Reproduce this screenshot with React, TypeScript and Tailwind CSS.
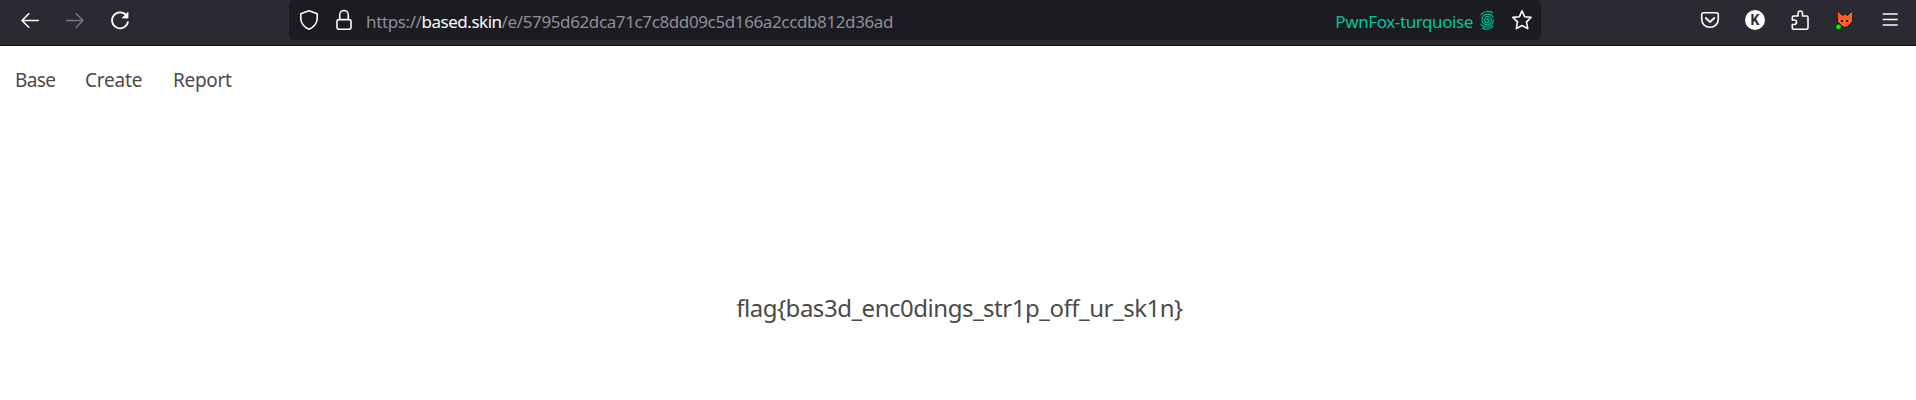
import React from "react";

const FOX = [
  "..k............k..",
  "..ok..........ko..",
  "..ook........koo..",
  "..oook......kooo..",
  "..ooookooookoooo..",
  "..oooooooooooooo..",
  "..oooooooooooooo..",
  "k.oooooooooooooo.k",
  ".kooooooooooooook.",
  "..oookkoookkoooo..",
  "..oookkoookkoooo..",
  ".k.oooooooooooo.k.",
  "....oooooooooo....",
  ".....oooooooo.....",
  "......oooooo......",
  ".......kook.......",
  "........kk........",
];

function Icon({ className, viewBox, children }: { className: string; viewBox: string; children: React.ReactNode }) {
  return (
    <svg className={`block shrink-0 ${className}`} viewBox={viewBox} fill="none" stroke="currentColor" strokeWidth="1.6" strokeLinecap="round" strokeLinejoin="round">
      {children}
    </svg>
  );
}

function Arrow({ className }: { className: string }) {
  return (
    <Icon className={`h-5 w-5 ${className}`} viewBox="0 0 20 20">
      <path d="M18.3 10.5H2M8.8 3.7 2 10.5l6.8 6.8" />
    </Icon>
  );
}

function AddressBar() {
  return (
    <div className="flex h-10 w-[1252px] shrink-0 items-start rounded-[5px] bg-[#1c1b22] text-[17px] leading-6 text-[#fbfbfe]">
      <Icon className="ml-[10px] mt-[9px] h-[22px] w-5" viewBox="0 0 20 22">
        <path d="M10 1.8 18.2 4.8V9.5C18.2 14.2 14.5 18.5 10 20.3 5.5 18.5 1.8 14.2 1.8 9.5V4.8Z" />
      </Icon>
      <Icon className="ml-[17px] mt-[9px] h-[22px] w-4" viewBox="0 0 16 22">
        <rect x="1" y="10.6" width="14" height="9.6" rx="2" />
        <path d="M3.7 10.5V5.8a4.3 4.3 0 0 1 8.6 0v4.7" />
      </Icon>
      <span className="ml-[14px] mt-[10px] w-[700px] whitespace-nowrap text-[#8f8f96] tracking-[-0.38px]">
        https://<span className="text-[#fbfbfe] tracking-[-0.48px]">based.skin</span>/e/5795d62dca71c7c8dd09c5d166a2ccdb812d36ad
      </span>
      <span className="ml-auto mt-[10px] whitespace-nowrap text-[#00c79a] tracking-[-0.4px]">PwnFox-turquoise</span>
      <Icon className="ml-[6px] mt-[10px] h-5 w-4 text-[#00b88f]" viewBox="0 0 16 20">
        <g strokeWidth="1.2">
          <path d="M8.300 10.300c-1-.3-.6-1.800.5-1.600 2.200.3 1.500 4-.9 3.900-3.600-.1-3.200-6.300 1-6.200 4.900.2 4.200 8.300-.9 8.400C1.400 14.900 1 4.400 8.700 4.100c2.600-.1 4.400 1.200 5.200 3" />
          <path d="M2 4.800C4.500.9 10.300.6 13.500 2.700M14.300 9.800c.1 4-2.700 7.200-6.500 7.200-2.400 0-4.400-.9-5.800-2.700M3.500 18.100c3.700 1.800 8 1.100 10.500-2" />
        </g>
      </Icon>
      <Icon className="ml-[16px] mr-[8px] mt-[9px] h-[22px] w-[22px]" viewBox="0 0 22 22">
        <path d="m11 1.9 2.6 5.8 6.5.7-4.6 4.4 1.2 6.8L11 16.5l-5.7 3.1 1.200-6.800L1.900 8.400l6.500-.7Z" />
      </Icon>
    </div>
  );
}

function Fox() {
  return (
    <svg className="block h-5 w-5 shrink-0" viewBox="0 0 20 20" shapeRendering="crispEdges">
      {FOX.flatMap((row, y) =>
        row.split("").map((c, x) =>
          c === "." ? null : <rect key={`${x}-${y}`} x={x + 1} y={y + 1} width="1" height="1" fill={c === "o" ? "#ff5c28" : "#17100f"} />,
        ),
      )}
      <circle cx="3.5" cy="16.8" r="2.900" fill="#00f500" stroke="#101010" strokeWidth=".8" shapeRendering="auto" />
    </svg>
  );
}

export default function App() {
  return (
    <div className="flex h-[400px] w-[1916px] flex-col overflow-hidden bg-white font-['Noto_Sans','Open_Sans',sans-serif]">
      <header className="flex h-[46px] shrink-0 items-start border-b border-[#0c0c0d] bg-[#2b2a33] text-[#fbfbfe]">
        <div className="flex w-[289px] shrink-0 gap-[25px] pl-5 pt-[10px]">
          <Arrow className="" />
          <Arrow className="-scale-x-100 text-[#77767d]" />
          <Icon className="-ml-px h-[22px] w-[22px]" viewBox="0 0 22 22">
            <path strokeWidth="1.8" strokeLinecap="butt" d="M17.300 5.300A8 8 0 1 0 19 11.300" />
            <path d="M19 2.500v5.500h-5.500Z" fill="currentColor" strokeWidth=".8" />
          </Icon>
        </div>
        <AddressBar />
        <div className="ml-auto flex items-start gap-[25px] pr-4 pt-[10px]">
          <Icon className="h-5 w-5" viewBox="0 0 20 20">
            <path d="M3.500 2.800h13a1.800 1.800 0 0 1 1.800 1.800V9c0 5.200-3.800 8.300-8.300 8.300S1.700 14.200 1.700 9V4.600A1.800 1.800 0 0 1 3.500 2.800Z" />
            <path strokeWidth="1.8" d="m5.700 8 4.300 4 4.300-4" />
          </Icon>
          <span className="flex h-5 w-5 items-center justify-center rounded-full bg-[#fbfbfe] font-['Roboto',sans-serif] text-[14px] font-bold leading-5 text-[#2b2a33]">K</span>
          <Icon className="-mt-px h-[22px] w-5" viewBox="0 0 20 22">
            <path d="M3.300 20.200h13.200a1.500 1.500 0 0 0 1.500-1.500V8.500A1.500 1.500 0 0 0 16.500 7h-4V4.200a2.200 2.200 0 0 0-4.400 0V7H3.800a1.500 1.500 0 0 0-1.500 1.500V11h2a2.200 2.200 0 0 1 0 4.500h-2v3.700q0 1 1 1Z" />
          </Icon>
          <Fox />
          <Icon className="h-5 w-5" viewBox="0 0 20 20">
            <path strokeWidth="1.500" strokeLinecap="butt" d="M2.700 4h15M2.700 9.500h15M2.700 15h15" />
          </Icon>
        </div>
      </header>
      <nav className="flex h-[68px] shrink-0 items-center pl-[15px] text-[19px] leading-7 text-[#4a4a4a]">
        <a className="w-[70px] tracking-[-0.6px]">Base</a>
        <a className="w-[88px] tracking-[-0.2px]">Create</a>
        <a className="tracking-[-0.3px]">Report</a>
      </nav>
      <main className="flex flex-1 items-start justify-center pt-[176px]">
        <p className="whitespace-nowrap pl-[3px] text-[24px] leading-9 text-[#4a4a4a] tracking-[-0.48px]">flag&#123;bas3d_enc0dings_str1p_off_ur_sk1n&#125;</p>
      </main>
    </div>
  );
}
